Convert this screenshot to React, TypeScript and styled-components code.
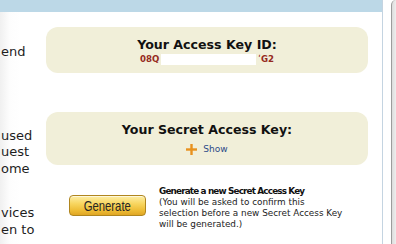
import React from "react";
import styled, { createGlobalStyle } from "styled-components";

const GlobalStyle = createGlobalStyle`
  html, body {
    margin: 0;
    padding: 0;
    background: #ffffff;
  }
  body {
    width: 396px;
    height: 244px;
    overflow: hidden;
    font-family: Verdana, "DejaVu Sans", sans-serif;
    color: #222;
  }
`;

const Frame = styled.div`
  display: flex;
  width: 396px;
  height: 244px;
  overflow: hidden;
  background: #ffffff;
`;

const Page = styled.div`
  width: 382px;
  flex: none;
  border-right: 1px solid #c4d4e1;
  display: flex;
  flex-direction: column;
`;

const TopBar = styled.div`
  height: 12px;
  background: #bcd8e7;
`;

const Body = styled.div`
  flex: 1;
  display: flex;
  background: linear-gradient(to right, #f0f0f0 0px, #fdfdfd 10px, #ffffff 20px);
`;

const SideText = styled.div`
  width: 46px;
  flex: none;
  overflow: hidden;
  white-space: nowrap;
  font-size: 13px;
  line-height: 16.5px;
  color: #1e1e1e;
  padding-top: 32px;
  padding-left: 1px;
  box-sizing: border-box;
`;

const SidePara = styled.p<{ $gap: number }>`
  margin: 0 0 ${(p) => p.$gap}px 0;
`;

const Main = styled.div`
  width: 322px;
  flex: none;
  display: flex;
  flex-direction: column;
  padding-top: 15px;
`;

const KeyPanel = styled.section<{ $height: number; $gap: number }>`
  height: ${(p) => p.$height}px;
  margin-bottom: ${(p) => p.$gap}px;
  background: #f1efd9;
  border-radius: 12px;
  display: flex;
  flex-direction: column;
  align-items: center;
  padding-top: 10px;
  box-sizing: border-box;
`;

const PanelTitle = styled.h2`
  margin: 0;
  font-size: 12.6px;
  line-height: 16px;
  font-weight: bold;
  color: #111;
`;

const KeyLine = styled.div`
  display: flex;
  align-items: center;
  height: 12px;
  font-size: 8.6px;
  font-weight: bold;
  color: #962a1e;
`;

const Redaction = styled.span`
  display: inline-block;
  width: 95px;
  height: 11px;
  margin: 0 2px;
  background: #ffffff;
`;

const ShowLink = styled.a`
  display: flex;
  align-items: center;
  gap: 6px;
  margin-top: 4px;
  height: 14px;
  font-size: 9px;
  color: #2c4a88;
  text-decoration: none;
  cursor: pointer;
`;

const GenerateRow = styled.div`
  display: flex;
  align-items: flex-start;
  padding-left: 23px;
  margin-top: -13px;
  gap: 13px;
`;

const GenerateButton = styled.button`
  margin-top: 9px;
  width: 77px;
  height: 21px;
  flex: none;
  padding: 0;
  border: 1px solid #b0861f;
  border-radius: 4px;
  background: linear-gradient(to bottom, #fdeea6 0%, #f8d660 40%, #eebd36 75%, #e0a624 100%);
  box-shadow: inset 0 1px 0 rgba(255, 255, 255, 0.6);
  display: flex;
  align-items: center;
  justify-content: center;
  cursor: pointer;
`;

const ButtonLabel = styled.span`
  display: inline-block;
  font-family: "Liberation Sans", Arial, sans-serif;
  font-size: 14.5px;
  color: #262626;
  transform: scaleX(0.78);
  white-space: nowrap;
`;

const Note = styled.div`
  font-size: 8.85px;
  line-height: 11px;
  color: #1c1c1c;
`;

const NoteTitle = styled.div`
  font-weight: bold;
  letter-spacing: -0.85px;
  color: #111;
`;

const PlusIcon = () => (
  <svg width="11" height="11" viewBox="0 0 11 11" aria-hidden="true">
    <rect x="4.3" y="0" width="2.4" height="11" fill="#e8921e" />
    <rect x="0" y="4.3" width="11" height="2.4" fill="#e8921e" />
  </svg>
);

const Gutter = styled.div`
  width: 8px;
  flex: none;
`;

const ScrollTrack = styled.div`
  flex: 1;
  border-left: 1px solid #9c9c9c;
  border-top-left-radius: 5px;
  background: linear-gradient(to right, #dcdcdc, #eeeeee);
`;

export default function App() {
  return (
    <>
      <GlobalStyle />
      <Frame>
        <Page>
          <TopBar />
          <Body>
            <SideText>
              <SidePara $gap={67}>end</SidePara>
              <SidePara $gap={28}>
                used
                <br />
                uest
                <br />
                ome
              </SidePara>
              <SidePara $gap={0}>
                vices
                <br />
                en to
              </SidePara>
            </SideText>
            <Main>
              <KeyPanel $height={46} $gap={39}>
                <PanelTitle>Your Access Key ID:</PanelTitle>
                <KeyLine>
                  08Q
                  <Redaction />
                  ʹG2
                </KeyLine>
              </KeyPanel>
              <KeyPanel $height={53} $gap={34}>
                <PanelTitle>Your Secret Access Key:</PanelTitle>
                <ShowLink>
                  <PlusIcon />
                  Show
                </ShowLink>
              </KeyPanel>
              <GenerateRow>
                <GenerateButton>
                  <ButtonLabel>Generate</ButtonLabel>
                </GenerateButton>
                <Note>
                  <NoteTitle>Generate a new Secret Access Key</NoteTitle>
                  (You will be asked to confirm this
                  <br />
                  selection before a new Secret Access Key
                  <br />
                  will be generated.)
                </Note>
              </GenerateRow>
            </Main>
          </Body>
        </Page>
        <Gutter />
        <ScrollTrack />
      </Frame>
    </>
  );
}
